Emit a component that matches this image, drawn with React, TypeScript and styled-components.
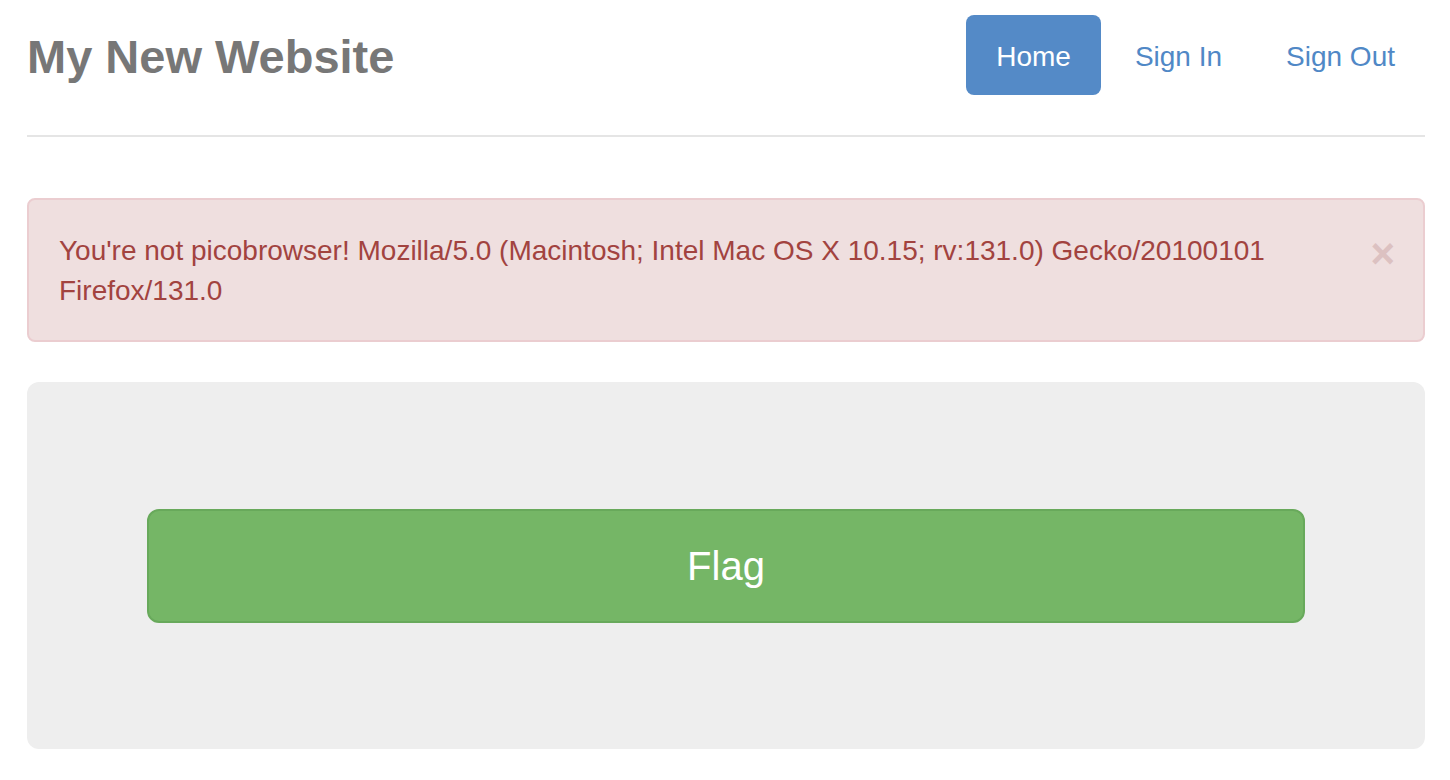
import React from "react";
import styled, { createGlobalStyle } from "styled-components";

const GlobalStyle = createGlobalStyle`
  html, body {
    margin: 0;
    padding: 0;
    background: #ffffff;
  }
  body {
    font-family: "Liberation Sans", Arial, Helvetica, sans-serif;
    color: #333333;
  }
`;

const Page = styled.div`
  padding: 15px 25px 30px 27px;
`;

const Header = styled.header`
  display: flex;
  align-items: center;
  justify-content: space-between;
  padding-bottom: 40px;
  border-bottom: 2px solid #e5e5e5;
  margin-bottom: 61px;
`;

const Title = styled.h3`
  margin: 0;
  padding-top: 4px;
  font-size: 47px;
  line-height: 76px;
  font-weight: bold;
  color: #777777;
`;

const Nav = styled.nav`
  display: flex;
  gap: 4px;
`;

const NavLink = styled.a<{ $active?: boolean }>`
  display: block;
  padding: 22px 30px 18px;
  font-size: 28px;
  line-height: 40px;
  border-radius: 8px;
  text-decoration: none;
  color: ${(p) => (p.$active ? "#ffffff" : "#5088c6")};
  background: ${(p) => (p.$active ? "#548ac7" : "transparent")};
  cursor: pointer;
`;

const Alert = styled.div`
  display: flex;
  align-items: flex-start;
  padding: 31px 28px 29px 30px;
  margin-bottom: 40px;
  background: #efdfdf;
  border: 2px solid #ebcdd0;
  border-radius: 8px;
  color: #a2433f;
`;

const AlertText = styled.div`
  flex: 1;
  font-size: 28px;
  line-height: 40px;
`;

const Close = styled.button`
  margin: 2px 0 0 18px;
  padding: 0;
  border: none;
  background: transparent;
  font-family: "Liberation Sans", Arial, sans-serif;
  font-size: 42px;
  font-weight: bold;
  line-height: 42px;
  color: #dcc1c1;
  cursor: pointer;
`;

const Jumbotron = styled.div`
  padding: 127px 120px 126px;
  background: #eeeeee;
  border-radius: 12px;
`;

const FlagButton = styled.button`
  display: block;
  width: 100%;
  height: 114px;
  border: 2px solid #68a95b;
  border-radius: 12px;
  background: #75b666;
  color: #ffffff;
  font-family: "Liberation Sans", Arial, sans-serif;
  font-size: 40px;
  cursor: pointer;
`;

export default function App() {
  return (
    <>
      <GlobalStyle />
      <Page>
        <Header>
          <Title>My New Website</Title>
          <Nav>
            <NavLink $active>Home</NavLink>
            <NavLink>Sign In</NavLink>
            <NavLink>Sign Out</NavLink>
          </Nav>
        </Header>
        <Alert>
          <AlertText>
            You're not picobrowser! Mozilla/5.0 (Macintosh; Intel Mac OS X
            10.15; rv:131.0) Gecko/20100101 Firefox/131.0
          </AlertText>
          <Close aria-label="Close">×</Close>
        </Alert>
        <Jumbotron>
          <FlagButton>Flag</FlagButton>
        </Jumbotron>
      </Page>
    </>
  );
}
